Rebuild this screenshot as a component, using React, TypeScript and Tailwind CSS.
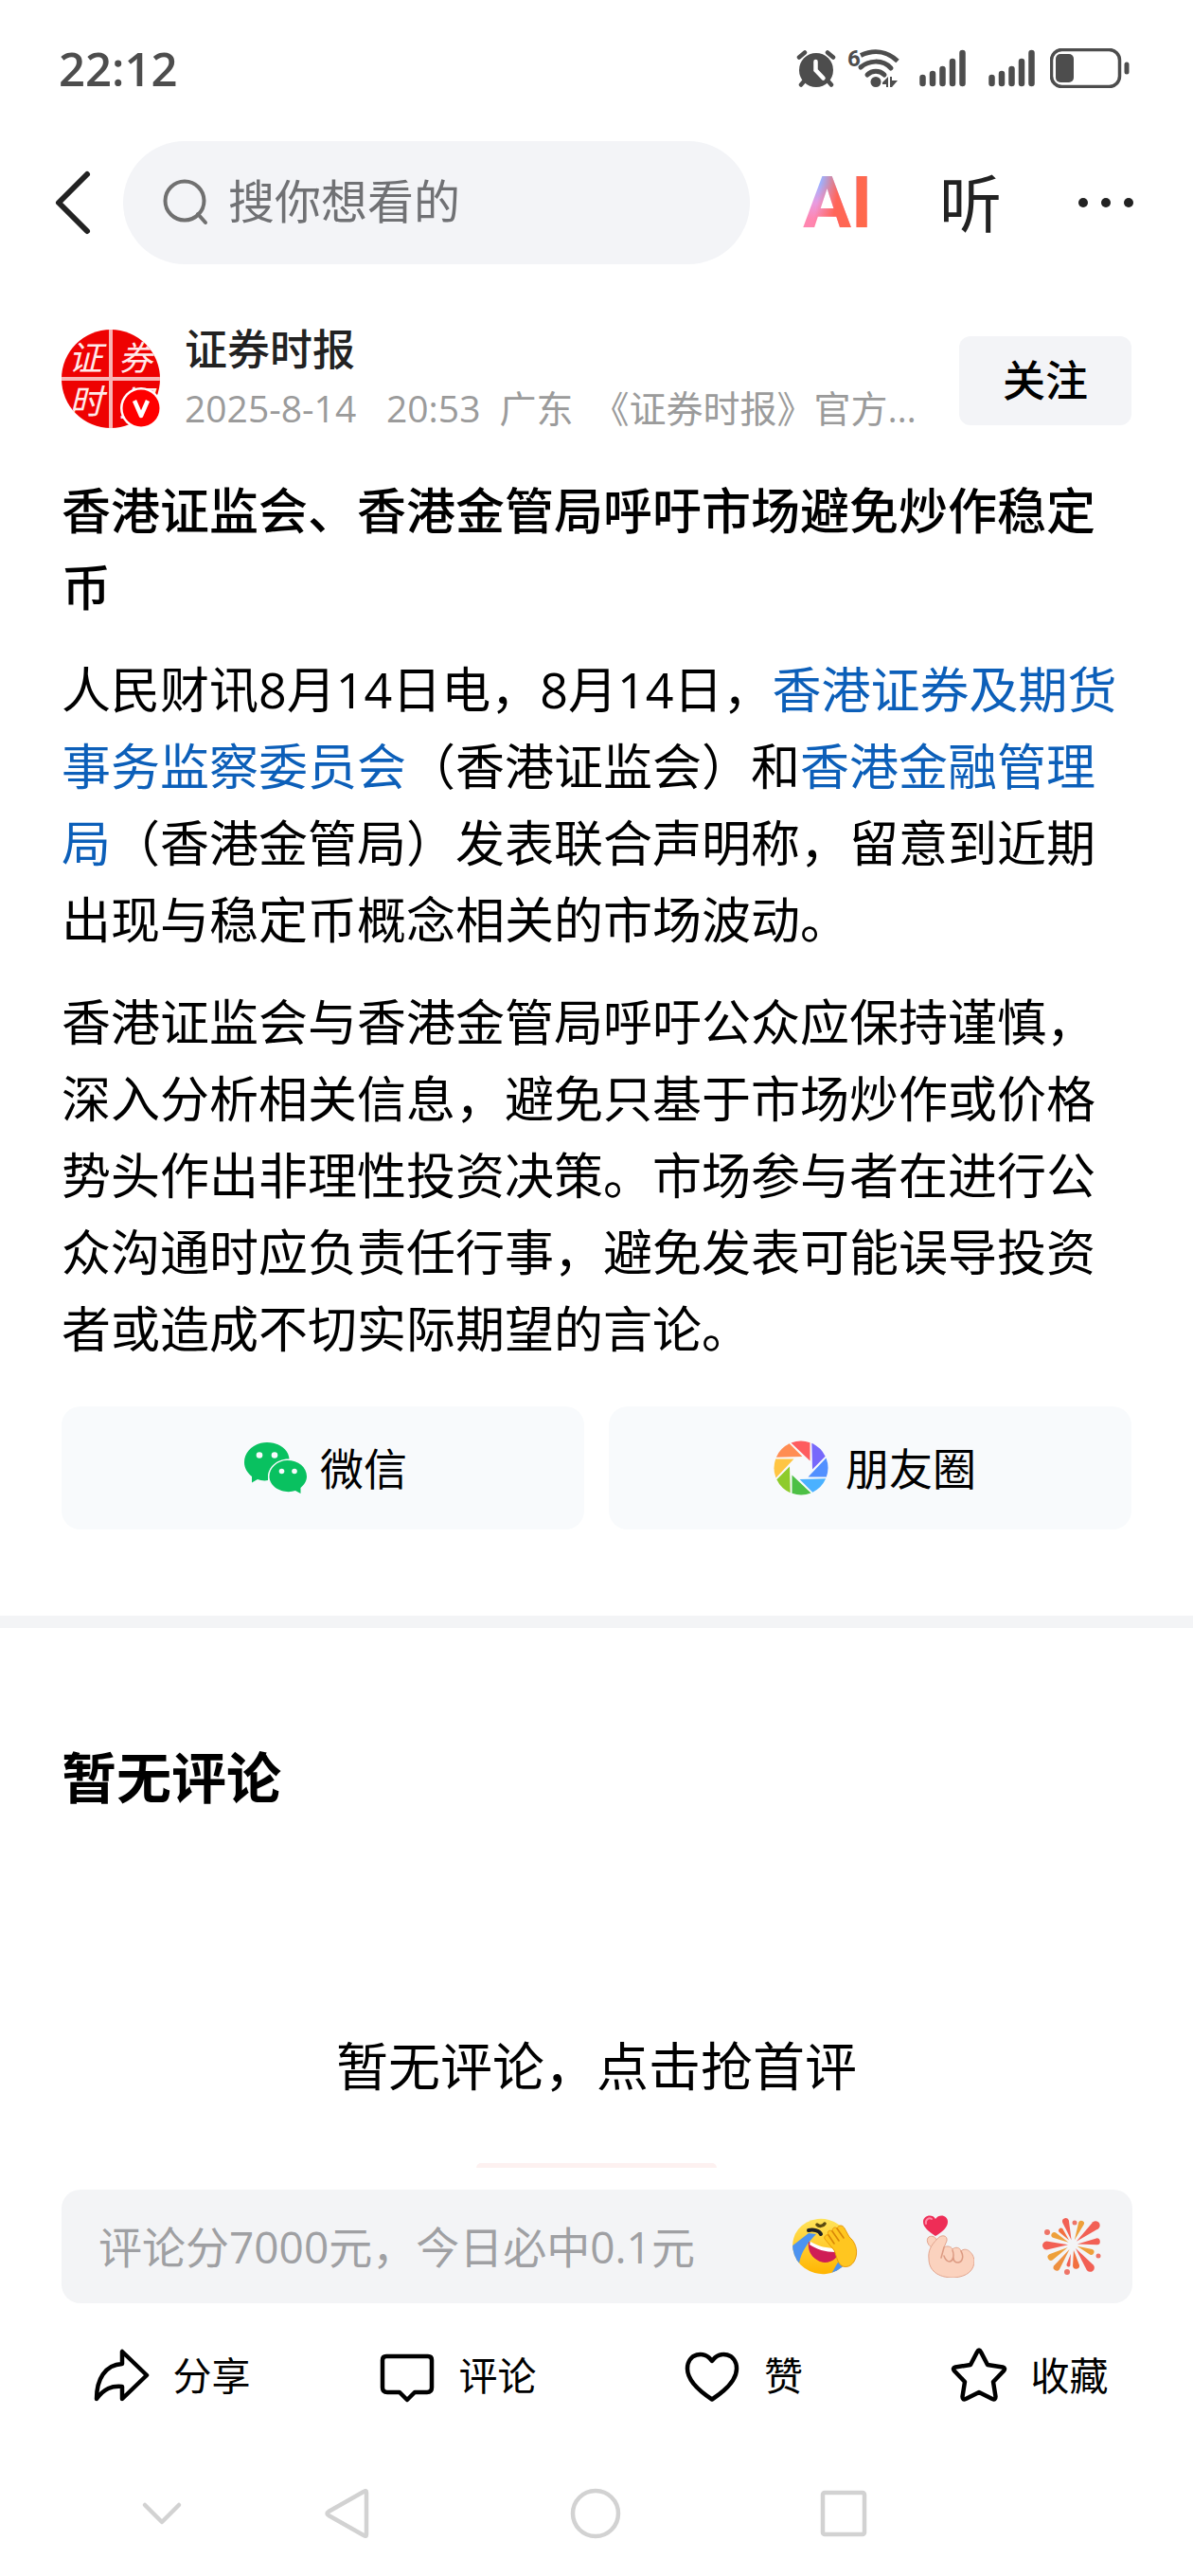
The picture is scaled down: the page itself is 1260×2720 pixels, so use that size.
import type { ReactNode } from 'react';

function AlarmIcon() {
  return (
    <svg viewBox="0 0 42 40" className="w-[42px] h-[40px]" fill="none" stroke="#4d4d4d" strokeLinecap="round">
      <circle cx="21" cy="22" r="18" fill="#4d4d4d" stroke="none" />
      <path d="M3 8.500 9 3.500M39 8.500 33 3.500" strokeWidth="4.500" />
      <path d="M8 34 5 37.500M34 34 37 37.500" strokeWidth="4.500" />
      <path d="M20.500 13V22L28.500 30.500" stroke="#fff" strokeWidth="4.500" />
    </svg>
  );
}

function WifiIcon() {
  return (
    <svg viewBox="0 0 56 42" className="w-[56px] h-[42px]" fill="none" stroke="#4d4d4d" strokeWidth="5">
      <text x="0" y="19" fontSize="24" fontWeight="700" fontFamily="Roboto, sans-serif" fill="#4d4d4d" stroke="none">
        6
      </text>
      <path d="M14 7.500C28 1 42 3 53 13.500" />
      <path d="M14 20C22 13 37 11 46 21" strokeLinecap="round" />
      <path d="M21 28C26 23 34 23 39 28" strokeLinecap="round" />
      <circle cx="30" cy="35.500" r="5.500" fill="#4d4d4d" stroke="none" />
      <path d="M37 36 43 30V41H41V38H37ZM45 30H47V34H53L47 41H45Z" fill="#4d4d4d" stroke="none" />
    </svg>
  );
}

function SignalIcon() {
  return (
    <svg viewBox="0 0 49 40" className="w-[49px] h-[40px]" stroke="#4d4d4d" strokeWidth="6.500" strokeLinecap="round">
      <path d="M3.500 30V36M14 26V36M24.500 21V36M35 13V36M45.500 4V36" />
    </svg>
  );
}

function BatteryIcon() {
  return (
    <svg viewBox="0 0 84 42" className="w-[84px] h-[42px]">
      <rect x="1.500" y="1.500" width="72" height="39" rx="11" fill="none" stroke="#4d4d4d" strokeWidth="3.500" />
      <rect x="6" y="6" width="19" height="30" rx="5" fill="#4d4d4d" />
      <path d="M81 17V25" stroke="#4d4d4d" strokeWidth="5" strokeLinecap="round" />
    </svg>
  );
}

function StatusBar() {
  return (
    <div className="h-[144px] pl-[62px] pr-[67px] flex items-center justify-between">
      <span className="text-[49px] leading-[60px] font-semibold text-[#4d4d4d]">22:12</span>
      <div className="flex items-center">
        <AlarmIcon />
        <div className="ml-[12px]"><WifiIcon /></div>
        <div className="ml-[20px]"><SignalIcon /></div>
        <div className="ml-[24px]"><SignalIcon /></div>
        <div className="ml-[16px]"><BatteryIcon /></div>
      </div>
    </div>
  );
}

function Header() {
  return (
    <header className="pt-[5px] pl-[54px] pr-[60px] flex items-center">
      <button aria-label="返回" className="w-[44px] h-[80px] flex items-center">
        <svg viewBox="0 0 44 80" className="w-[44px] h-[80px]" fill="none" stroke="#222" strokeWidth="6" strokeLinecap="round" strokeLinejoin="round">
          <path d="M38 10 8 40 38 70" />
        </svg>
      </button>
      <label className="ml-[32px] flex-1 min-w-0 h-[130px] rounded-full bg-[#f3f4f7] flex items-center pl-[42px] pr-10">
        <svg viewBox="0 0 50 50" className="w-[50px] h-[50px] shrink-0" fill="none" stroke="#707070" strokeWidth="4" strokeLinecap="round">
          <circle cx="23" cy="23" r="20.500" />
          <path d="M37 37 45 46" />
        </svg>
        <input
          type="search"
          aria-label="搜索"
          placeholder="搜你想看的"
          className="ml-[19px] pb-[4px] flex-1 min-w-0 bg-transparent outline-none text-[49px] leading-[70px] placeholder:text-[#707174] placeholder:opacity-100"
        />
      </label>
      <button className="ml-[56px] w-[70px] text-left font-[Roboto,sans-serif] text-[76px] leading-[80px] font-bold text-transparent bg-clip-text bg-[linear-gradient(100deg,transparent_26%,#ff6558_50%,#ff6a48_100%),linear-gradient(180deg,#9db2ff_25%,#e89be0_50%,#ff86b0_72%)]">
        AI
      </button>
      <button className="ml-[74px] text-[66px] leading-[80px] text-[#222]">听</button>
      <button aria-label="更多" className="ml-[78px] w-[64px] h-[80px] flex items-center">
        <svg viewBox="0 0 64 12" className="w-[64px] h-[12px]" fill="#222">
          <circle cx="8" cy="6" r="5" />
          <circle cx="32" cy="6" r="5" />
          <circle cx="56" cy="6" r="5" />
        </svg>
      </button>
    </header>
  );
}

function Avatar() {
  return (
    <svg viewBox="0 0 104 104" className="w-[104px] h-[104px] shrink-0" role="img" aria-label="证券时报">
      <defs>
        <clipPath id="avatar-clip">
          <circle cx="52" cy="52" r="52" />
        </clipPath>
      </defs>
      <g clipPath="url(#avatar-clip)">
        <rect width="104" height="104" fill="#ee0202" />
        <g fill="#ffeaea" fontFamily='"Noto Sans CJK SC", sans-serif' fontSize="36" fontStyle="italic">
          <text x="7" y="43">证</text>
          <text x="60" y="43">券</text>
          <text x="8" y="89">时</text>
          <text x="61" y="91">报</text>
        </g>
        <path d="M52 0V104M0 52H104" stroke="#f9b4b4" strokeWidth="4" />
      </g>
      <circle cx="84" cy="83" r="22" fill="#fff" />
      <circle cx="84" cy="83" r="19.500" fill="#f00" />
      <path d="M77 75 84 91 91 75" fill="none" stroke="#fff" strokeWidth="4.500" strokeLinejoin="round" />
    </svg>
  );
}

function Author() {
  return (
    <div className="mt-[59px] flex items-center">
      <Avatar />
      <div className="ml-[26px] flex-1 min-w-0">
        <div className="text-[45px] leading-[62px] text-[#222] font-medium">证券时报</div>
        <div className="flex gap-[20px] text-[39px] leading-[62px] text-[#9b9b9b]">
          <span className="w-[193px] shrink-0 whitespace-nowrap">2025-8-14</span>
          <span className="shrink-0">20:53</span>
          <span className="shrink-0">广东</span>
          <span className="truncate">《证券时报》官方账号</span>
        </div>
      </div>
      <button className="mt-[4px] ml-[38px] w-[182px] h-[94px] rounded-xl bg-[#f3f4f7] text-[45px] leading-[62px] font-medium">关注</button>
    </div>
  );
}

function WechatIcon() {
  return (
    <svg viewBox="0 0 66 54" className="w-[66px] h-[54px]" fill="#09c160">
      <path d="M24 0C37 0 47 8 47.500 17.500C34 17 25 27 25 36V40C21 41 17 40 14 39L8 42.500V36C3 32 0 27 0 21C0 9 11 0 24 0Z" />
      <path d="M45.500 19C57 19 66 26 66 36C66 41 63 45 59.500 48V54L54 51C42 55 26.500 48 26.500 36C26.500 27 35 19 45.500 19Z" />
      <g fill="#f8fafc">
        <circle cx="16" cy="13.500" r="3.300" />
        <circle cx="32" cy="13.500" r="3.300" />
        <circle cx="39.500" cy="30.500" r="2.800" />
        <circle cx="53" cy="30.500" r="2.800" />
      </g>
    </svg>
  );
}

const blades = ['#fe5c5f', '#7768fb', '#5290ff', '#4ab1ff', '#4dc045', '#8ecb2b', '#ffc543', '#ff8d53'];

function MomentsIcon() {
  return (
    <svg viewBox="-29 -29 58 58" className="w-[58px] h-[58px]">
      {blades.map((color, i) => (
        <path key={color} transform={`rotate(${i * 45})`} fill={color} d="M-10.500 -26.500A28.500 28.500 0 0 1 9.500 -26.800V-7.500Z" />
      ))}
    </svg>
  );
}

function ShareButtons() {
  return (
    <div className="mt-[42px] grid grid-cols-2 gap-[26px] text-[46px] leading-[64px]">
      <button className="h-[130px] rounded-[20px] bg-[#f8fafc] flex items-center justify-center gap-[14px] pl-[6px]">
        <WechatIcon />
        微信
      </button>
      <button className="h-[130px] rounded-[20px] bg-[#f8fafc] flex items-center justify-center gap-[18px] pl-[10px]">
        <MomentsIcon />
        朋友圈
      </button>
    </div>
  );
}

function Article() {
  return (
    <article className="px-[65px] text-[52px] leading-[81px] text-black">
      <Author />
      <h1 className="mt-[36px] font-medium">香港证监会、香港金管局呼吁市场避免炒作稳定币</h1>
      <p className="mt-[27px]">
        人民财讯8月14日电，8月14日，
        <a href="#sfc" className="text-[#0c5fb9]">香港证券及期货事务监察委员会</a>
        （香港证监会）和
        <a href="#hkma" className="text-[#0c5fb9]">香港金融管理局</a>
        （香港金管局）发表联合声明称，留意到近期出现与稳定币概念相关的市场波动。
      </p>
      <p className="mt-[27px]">
        香港证监会与香港金管局呼吁公众应保持谨慎，深入分析相关信息，避免只基于市场炒作或价格势头作出非理性投资决策。市场参与者在进行公众沟通时应负责任行事，避免发表可能误导投资者或造成不切实际期望的言论。
      </p>
      <ShareButtons />
    </article>
  );
}

function Comments() {
  return (
    <section className="mt-[91px] border-t-[13px] border-[#f3f4f6] text-black">
      <h2 className="px-[65px] pt-[118px] text-[58px] leading-[80px] font-bold">暂无评论</h2>
      <p className="mt-[224px] text-center text-[55px] leading-[80px]">暂无评论，点击抢首评</p>
      <div className="mt-[63px] mx-auto w-[254px] h-[5px] rounded-t-full bg-[#fdf1f0]" />
    </section>
  );
}

function LaughIcon() {
  return (
    <svg viewBox="0 0 70 60" className="w-[70px] h-[60px]">
      <defs>
        <linearGradient id="face" x1="0" y1="0" x2="0" y2="1">
          <stop offset="0" stopColor="#ffe45c" />
          <stop offset="1" stopColor="#ffb400" />
        </linearGradient>
        <clipPath id="face-clip">
          <ellipse cx="32" cy="30" rx="31" ry="29" transform="rotate(15 32 30)" />
        </clipPath>
      </defs>
      <g clipPath="url(#face-clip)">
        <rect width="70" height="60" fill="url(#face)" />
        <path d="M18 16 26 17C17 26 10 36 8 48L0 44V30Z" fill="#4c93f0" />
        <path d="M46 52 50 45 62 50 52 60 42 59Z" fill="#4c93f0" />
        <path d="M18 25C27 32 38 34 49 33C51 40 44 47 35 47C25 46 16 37 18 25Z" fill="#cf1d56" />
        <path d="M20 25C29 30 37 32 47 32L46 36C36 36 26 33 19 28Z" fill="#fff" />
      </g>
      <path d="M18 13C23 12 29 13 31 17" fill="none" stroke="#1f2125" strokeWidth="4" strokeLinecap="round" />
      <path d="M27 7C29 9 33 9 35 6" fill="none" stroke="#5a4a10" strokeWidth="3.500" strokeLinecap="round" />
      <path d="M35 22C34 19 37 17 39 18C37 14 40 12 43 14C43 10 46 9 48 11C50 7 54 7 56 11L61 20C67 25 70 33 68 41C66 49 60 53 54 51C48 48 48 41 45 34Z" fill="#ffc620" stroke="#e99a0a" strokeWidth="1" />
      <path d="M39 18 45 27M43 14 50 24M48 11 55 21" fill="none" stroke="#d98708" strokeWidth="1.600" strokeLinecap="round" />
    </svg>
  );
}

function FingerHeartIcon() {
  return (
    <svg viewBox="0 0 54 66" className="w-[54px] h-[66px]">
      <path d="M13 22C6 17 0 13 0 7C0 0 10-2 13 4C17-2 26 0 26 7C26 13 20 18 13 22Z" fill="#ee2d57" />
      <path d="M3 9C2 5 6 2 9 4" fill="none" stroke="#ff8aa5" strokeWidth="2" strokeLinecap="round" />
      <g fill="#fbd2be" stroke="#e2a58e" strokeWidth="1">
        <path d="M9 34C4 31 3 25 6 23C9 21 14 23 15 28Z" />
        <path d="M6 46C5 38 8 32 15 25C19 20 26 21 25 27L22 34C25 32 30 33 31 36C34 33 39 34 40 38C45 33 53 39 54 48C54 58 47 65 32 66C15 66 6 58 6 46Z" />
      </g>
      <path d="M22 34 19 45M31 37C33 42 32 48 28 49C25 49 23 46 22 43M40 38C43 43 42 49 37 50C34 50 32 48 32 45" fill="none" stroke="#dc9a82" strokeWidth="1.500" strokeLinecap="round" />
    </svg>
  );
}

// angle, inner radius, outer radius, width, colour
const rays: [number, number, number, number, string][] = [
  [-17, 5, 29, 7, '#f26055'],
  [22, 5, 27, 6, '#eea03a'],
  [50, 5, 36, 9, '#f26055'],
  [83, 5, 29, 7, '#f26055'],
  [112, 5, 24, 6, '#eea03a'],
  [143, 5, 35, 9, '#f26055'],
  [171, 6, 26, 7, '#f2703f'],
  [192, 10, 24, 4, '#f26055'],
  [215, 6, 33, 7, '#ee9040'],
  [240, 6, 30, 7, '#eea03a'],
  [268, 5, 32, 9, '#f26055'],
  [297, 5, 25, 6, '#eea03a'],
  [320, 6, 22, 5, '#f2703f'],
];

function FireworkIcon() {
  return (
    <svg viewBox="0 0 62 62" className="w-[62px] h-[62px]">
      <g transform="translate(32 29)">
        {rays.map(([angle, inner, outer, width, color]) => (
          <path
            key={angle}
            transform={`rotate(${angle})`}
            fill={color}
            d={`M0 ${-inner}L${-width / 2} ${-outer + width / 2}A${width / 2} ${width / 2} 0 0 1 ${width / 2} ${-outer + width / 2}Z`}
          />
        ))}
      </g>
      <g fill="#ee7468">
        <circle cx="34" cy="6" r="2.500" />
        <circle cx="5" cy="16" r="3" />
        <circle cx="59" cy="41" r="2.500" />
        <circle cx="26" cy="58" r="3" />
      </g>
    </svg>
  );
}

function CommentBar() {
  return (
    <div className="mt-[23px] ml-[65px] mr-[64px] h-[120px] rounded-[20px] bg-[#f3f4f6] flex items-center pl-[39px] pr-[33px]">
      <input
        type="text"
        aria-label="发表评论"
        placeholder="评论分7000元，今日必中0.1元"
        className="flex-1 min-w-0 bg-transparent outline-none text-[46px] leading-[64px] placeholder:text-[#9fa0a3] placeholder:opacity-100"
      />
      <button aria-label="笑哭"><LaughIcon /></button>
      <button aria-label="比心" className="ml-[69px]"><FingerHeartIcon /></button>
      <button aria-label="烟花" className="ml-[72px]"><FireworkIcon /></button>
    </div>
  );
}

function Action({ label, children }: { label: string; children: ReactNode }) {
  return (
    <button className="flex items-center justify-center gap-[25px] text-[41px] leading-[60px] text-black">
      <svg viewBox="0 0 60 60" className="w-[60px] h-[60px]" fill="none" stroke="#000" strokeWidth="4.500" strokeLinecap="round" strokeLinejoin="round">
        {children}
      </svg>
      {label}
    </button>
  );
}

function ActionBar() {
  return (
    <div className="mt-[46px] pl-[30px] pr-[22px] grid grid-cols-4">
      <Action label="分享">
        <path d="M31 5V18C13 19 4 34 4 55C12 44 20 41 31 42V55L57 30Z" />
      </Action>
      <Action label="评论">
        <path d="M8 10H52Q56 10 56 14V43Q56 48 51 48H38L30 56 22 48H9Q4 48 4 43V14Q4 10 8 10Z" />
      </Action>
      <Action label="赞">
        <path d="M30 55.500C17 47 4 35 4 23C4 7 22 3 30 15C38 3 56 7 56 23C56 35 43 47 30 55.500Z" />
      </Action>
      <Action label="收藏">
        <path d="M28 5.500Q30 1.500 32 5.500L39 19 55 21.500Q58.500 22.500 56 25.500L45 37 47.500 52.500Q47.500 56.500 44 55L30 48 16 55Q12.500 56.500 12.500 52.500L15 37 4 25.500Q1.500 22.500 5 21.500L21 19Z" />
      </Action>
    </div>
  );
}

function NavBar() {
  return (
    <nav className="mt-[88px] pb-[38px] grid grid-cols-[236fr_262fr_262fr_262fr_238fr] items-center">
      <button aria-label="收起" className="pl-[105px] flex justify-center">
        <svg viewBox="0 0 44 56" className="w-[44px] h-[56px]" fill="none" stroke="#d2d2d2" strokeWidth="4.500" strokeLinecap="round" strokeLinejoin="round">
          <path d="M4 19 22 37 40 19" />
        </svg>
      </button>
      <button aria-label="后退" className="flex justify-center">
        <svg viewBox="0 0 50 56" className="w-[50px] h-[56px]" fill="none" stroke="#d2d2d2" strokeWidth="4.500" strokeLinejoin="round">
          <path d="M42 5Q45 3 45 6V50Q45 53 42 51L5 30Q2 28 5 26Z" />
        </svg>
      </button>
      <button aria-label="主页" className="flex justify-center">
        <svg viewBox="0 0 56 56" className="w-[56px] h-[56px]" fill="none" stroke="#d2d2d2" strokeWidth="4.500">
          <circle cx="28" cy="28" r="24" />
        </svg>
      </button>
      <button aria-label="最近任务" className="flex justify-center">
        <svg viewBox="0 0 56 56" className="w-[56px] h-[56px]" fill="none" stroke="#d2d2d2" strokeWidth="4.500">
          <rect x="6" y="6" width="44" height="44" rx="2" />
        </svg>
      </button>
    </nav>
  );
}

export default function App() {
  return (
    <div lang="zh-CN" className="bg-white font-['Open_Sans','Noto_Sans_CJK_SC',sans-serif]">
      <StatusBar />
      <Header />
      <Article />
      <Comments />
      <CommentBar />
      <ActionBar />
      <NavBar />
    </div>
  );
}
